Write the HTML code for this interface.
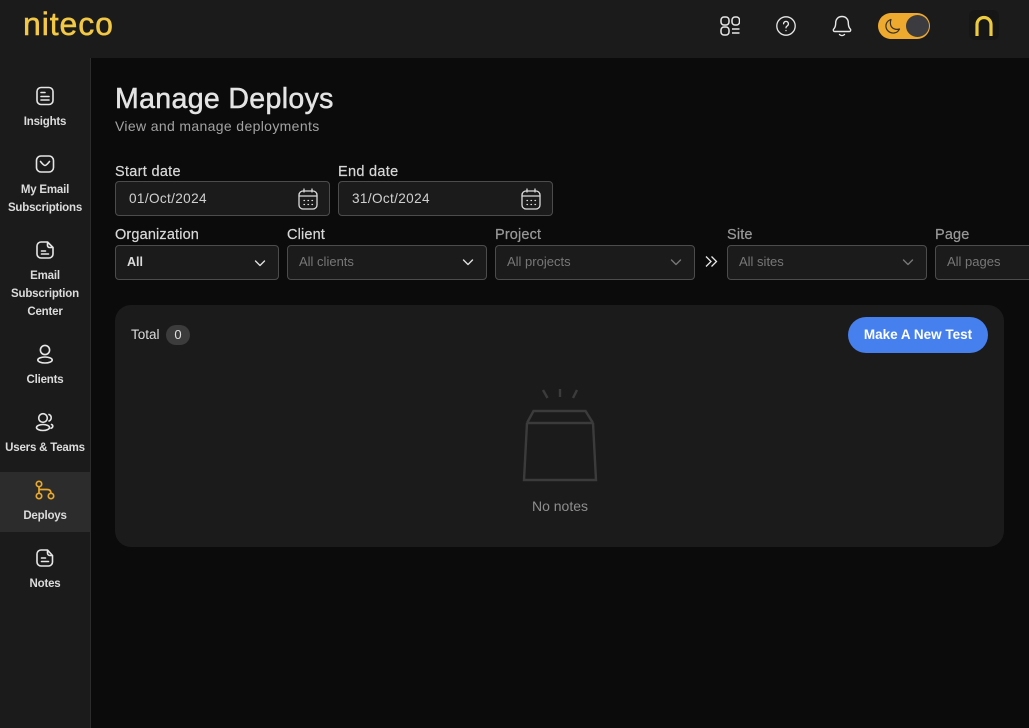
<!DOCTYPE html>
<html><head><meta charset="utf-8"><style>
*{box-sizing:border-box}
html,body{margin:0;width:1029px;height:728px;overflow:hidden;background:#0b0b0b;font-family:"Liberation Sans",sans-serif;color:#e4e4e4}
.a{position:absolute}
.t{position:absolute;white-space:nowrap;line-height:18px}
#top{left:0;top:0;width:1029px;height:58px;background:#1b1b1b}
#side{left:0;top:58px;width:91px;height:670px;background:#1b1b1b;border-right:1px solid #2c2c2c}
.nav{position:absolute;left:0;width:90px;text-align:center;font-size:11.5px;font-weight:700;line-height:18px;color:#dcdcdc;letter-spacing:-.2px}
.ic{position:absolute;left:35px;width:20px;height:20px;fill:none;stroke:#e6e6e6;stroke-width:1.6;stroke-linecap:round;stroke-linejoin:round}
.lb{font-size:14.5px;color:#d8d8d8;letter-spacing:.15px;-webkit-text-stroke:.2px currentColor}
.box{position:absolute;height:35px;background:#1b1b1b;border:1px solid #4c4c4c;border-radius:4px;font-size:13px;line-height:31px;padding-left:11px;color:#777;white-space:nowrap;overflow:hidden}
.dt{color:#d0d0d0;font-size:13.6px;letter-spacing:.35px;padding-left:13px;line-height:33px}
.ch{position:absolute;width:14px;height:14px;fill:none;stroke:#e0e0e0;stroke-width:1.4;stroke-linecap:round;stroke-linejoin:round}
</style></head><body>
<div class="a" id="top"></div>
<div class="t" style="left:23px;top:6px;line-height:36px;font-size:32px;color:#f2c844;letter-spacing:.9px;-webkit-text-stroke:.5px #f2c844">niteco</div>
<svg class="a" style="left:719px;top:16px;width:21px;height:20px;fill:none;stroke:#e8e8e8;stroke-width:1.5" viewBox="0 0 21 20"><rect x="2" y="1" width="8" height="8" rx="3"/><rect x="13" y="1" width="7.500" height="8" rx="3"/><rect x="2" y="11" width="8" height="8" rx="3"/><path d="M13 13h7.500M13 17h7.500"/></svg>
<svg class="a" style="left:776px;top:16px;width:20px;height:20px;fill:none;stroke:#e8e8e8;stroke-width:1.3;stroke-linecap:round" viewBox="0 0 20 20"><circle cx="10" cy="10" r="9.200"/><path d="M7.600 7.800a2.400 2.400 0 1 1 3.600 2.100c-.8.500-1.200 1-1.200 1.900M10 14.500v.1"/></svg>
<svg class="a" style="left:832px;top:15px;width:20px;height:23px;fill:none;stroke:#e8e8e8;stroke-width:1.400;stroke-linecap:round;stroke-linejoin:round" viewBox="0 0 20 23"><path d="M10 1.500c-3.900 0-6.300 2.800-6.300 6.300 0 3.700-.7 5-2 6.200-.9.900-.3 2.500 1 2.500h14.600c1.300 0 1.900-1.600 1-2.500-1.300-1.200-2-2.500-2-6.200 0-3.500-2.400-6.300-6.300-6.300zM7.500 19.500c1.500 1.400 3.500 1.400 5 0"/></svg>
<div class="a" style="left:878px;top:13px;width:52px;height:26px;border-radius:13px;background:#edaa2e"></div>
<div class="a" style="left:906px;top:15px;width:23px;height:22px;border-radius:50%;background:#3b3b40"></div>
<svg class="a" style="left:884px;top:18px;width:17px;height:17px;fill:none;stroke:#3a3222;stroke-width:1.200;stroke-linejoin:round" viewBox="0 0 17 17"><path d="M7 1.500c-3.500 1-5.500 4-5 7.500s4 6.500 8 6c2.500-.3 4.500-1.800 5.500-4-4 1.200-7.500-.5-8.700-3.500C6.200 5.500 6.200 3.500 7 1.500z"/></svg>
<div class="a" style="left:969px;top:10px;width:30px;height:30px;border-radius:6px;background:#161616"></div>
<svg class="a" style="left:974px;top:15px;width:20px;height:22px;fill:none;stroke:#eccb3e;stroke-width:3.200" viewBox="0 0 20 22"><path d="M3 21V9.500a7 7 0 0 1 14 0V21"/></svg>

<div class="a" id="side"></div>
<div class="a" style="left:0;top:472px;width:90px;height:60px;background:#2c2c2c"></div>

<svg class="ic" style="top:86px" viewBox="0 0 20 20"><rect x="2" y="1.500" width="16" height="17" rx="4"/><path d="M6 6.500h4M6 10.500h8M6 14h8"/></svg>
<div class="nav" style="top:113px">Insights</div>
<svg class="ic" style="top:154px" viewBox="0 0 20 20"><rect x="1.500" y="2" width="17" height="16" rx="4.500"/><path d="M5.500 7.500c2 2.500 3.500 4 4.500 4s2.500-1.500 4.500-4"/></svg>
<div class="nav" style="top:181px">My Email<br>Subscriptions</div>
<svg class="ic" style="top:240px" viewBox="0 0 20 20"><path d="M6 2h6.500l5.500 5.500V14a4 4 0 0 1-4 4H6a4 4 0 0 1-4-4V6a4 4 0 0 1 4-4zM12.500 2v3.500a2 2 0 0 0 2 2H18M6.500 11h4M6.500 14h7"/></svg>
<div class="nav" style="top:267px">Email<br>Subscription<br>Center</div>
<svg class="ic" style="top:344px" viewBox="0 0 20 20"><circle cx="10" cy="6" r="4.600"/><ellipse cx="10" cy="16" rx="7.200" ry="3"/></svg>
<div class="nav" style="top:371px">Clients</div>
<svg class="ic" style="top:412px" viewBox="0 0 20 20"><circle cx="8" cy="6" r="4.300"/><ellipse cx="8" cy="15.500" rx="6.500" ry="3"/><path d="M14 2.500a3.500 3.500 0 0 1 0 6.500M16.500 12.500c1.800.6 1.800 3-.5 3.800"/></svg>
<div class="nav" style="top:439px;white-space:nowrap">Users &amp; Teams</div>
<svg class="ic" style="top:480px;stroke:#e9a92e;stroke-width:1.700" viewBox="0 0 20 20"><circle cx="4" cy="4" r="2.700"/><circle cx="4" cy="16" r="2.700"/><circle cx="16" cy="16" r="2.700"/><path d="M4 6.700v6.600M4 9.500h8c2.500 0 4 1.200 4 3.800"/></svg>
<div class="nav" style="top:507px">Deploys</div>
<svg class="ic" style="top:548px" viewBox="0 0 20 20"><path d="M6 2h6.500l5 5.500V14a4 4 0 0 1-4 4H6a4 4 0 0 1-4-4V6a4 4 0 0 1 4-4zM12.500 2v3a2.500 2.500 0 0 0 2.500 2.500h2.500M6.500 10h4M6.500 13.500h7"/></svg>
<div class="nav" style="top:575px">Notes</div>

<div class="t" style="left:115px;top:82px;line-height:34px;font-size:28.500px;color:#e4e4e4;letter-spacing:.35px;-webkit-text-stroke:.5px #e4e4e4">Manage Deploys</div>
<div class="t" style="left:115px;top:117px;font-size:14px;color:#a3a3a3;letter-spacing:.35px">View and manage deployments</div>

<div class="t lb" style="left:115px;top:163px;letter-spacing:.3px">Start date</div>
<div class="box dt" style="left:115px;top:181px;width:215px">01/Oct/2024</div>
<div class="t lb" style="left:338px;top:163px;letter-spacing:.3px">End date</div>
<div class="box dt" style="left:338px;top:181px;width:215px">31/Oct/2024</div>
<svg class="a" style="left:298px;top:188px;width:20px;height:22px;fill:none;stroke:#dcdcdc;stroke-width:1.300;stroke-linecap:round" viewBox="0 0 20 22"><rect x="1" y="3" width="18" height="18" rx="4"/><path d="M1 8h18M6 1v3M14 1v3M6 12.500h.5M10 12.500h.5M14 12.500h.5M6 16.500h.5M10 16.500h.5M14 16.500h.5"/></svg>
<svg class="a" style="left:521px;top:188px;width:20px;height:22px;fill:none;stroke:#dcdcdc;stroke-width:1.300;stroke-linecap:round" viewBox="0 0 20 22"><rect x="1" y="3" width="18" height="18" rx="4"/><path d="M1 8h18M6 1v3M14 1v3M6 12.500h.5M10 12.500h.5M14 12.500h.5M6 16.500h.5M10 16.500h.5M14 16.500h.5"/></svg>

<div class="t lb" style="left:115px;top:226px">Organization</div>
<div class="box" style="left:115px;top:245px;width:164px;color:#dcdcdc;font-weight:700;font-size:12.500px;line-height:33px">All</div>
<svg class="ch" style="left:253px;top:256px" viewBox="0 0 14 14"><path d="M2.500 5l4.500 4.500L11.500 5"/></svg>
<div class="t lb" style="left:287px;top:226px">Client</div>
<div class="box" style="left:287px;top:245px;width:200px;height:35px">All clients</div>
<svg class="ch" style="left:461px;top:255px" viewBox="0 0 14 14"><path d="M2.500 5l4.500 4.500L11.500 5"/></svg>
<div class="t lb" style="left:495px;top:226px;color:#999">Project</div>
<div class="box" style="left:495px;top:245px;width:200px">All projects</div>
<svg class="ch" style="left:669px;top:255px;stroke:#777" viewBox="0 0 14 14"><path d="M2.500 5l4.500 4.500L11.500 5"/></svg>
<svg class="a" style="left:704px;top:255px;width:14px;height:14px;fill:none;stroke:#e8e8e8;stroke-width:1.300" viewBox="0 0 14 14"><path d="M2 1.500L7 6.500l-5 5M7.500 1.500l5 5-5 5"/></svg>
<div class="t lb" style="left:727px;top:226px;color:#999">Site</div>
<div class="box" style="left:727px;top:245px;width:200px">All sites</div>
<svg class="ch" style="left:901px;top:255px;stroke:#777" viewBox="0 0 14 14"><path d="M2.500 5l4.500 4.500L11.500 5"/></svg>
<div class="t lb" style="left:935px;top:226px;color:#999">Page</div>
<div class="box" style="left:935px;top:245px;width:120px">All pages</div>

<div class="a" style="left:115px;top:305px;width:889px;height:242px;border-radius:16px;background:#1b1b1b"></div>
<div class="t" style="left:131px;top:326px;font-size:13.500px;color:#dcdcdc">Total</div>
<div class="a" style="left:166px;top:325px;width:24px;height:20px;border-radius:10px;background:#3c3c3c;color:#e0e0e0;text-align:center;font-size:13px;line-height:20px">0</div>
<div class="a" style="left:848px;top:317px;width:140px;height:36px;border-radius:18px;background:#4580ee;color:#fff;text-align:center;font-weight:700;font-size:13.500px;line-height:35px;white-space:nowrap">Make A New Test</div>

<svg class="a" style="left:520px;top:385px;width:80px;height:100px;fill:none;stroke:#3b3b3b;stroke-width:2.400" viewBox="0 0 80 100"><path d="M23 5l4.500 8M40 4v8M57 5l-4 8M7 38l6.500-12h52L73 38M7 38h66M7 38L4 95h72L73 38"/></svg>
<div class="t" style="left:460px;width:200px;text-align:center;top:497px;font-size:14px;color:#8e8e8e">No notes</div>
</body></html>
